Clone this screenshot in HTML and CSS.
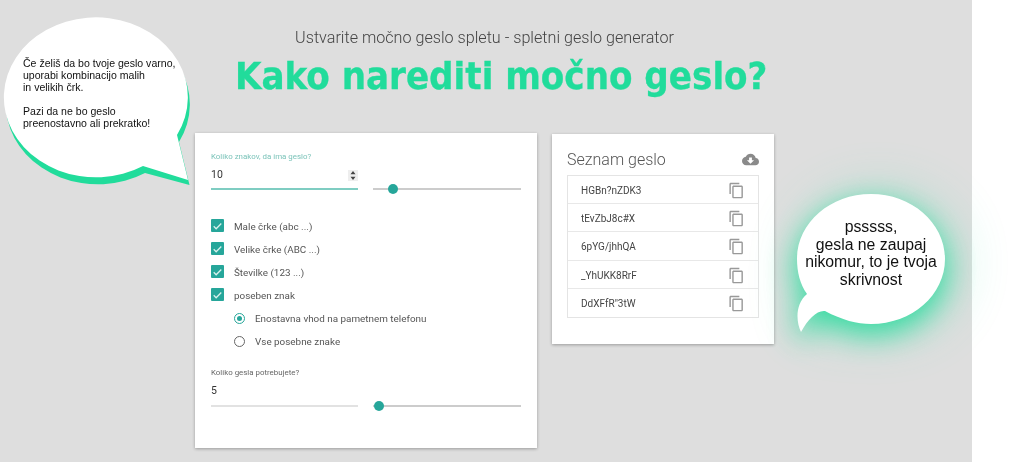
FILE: index.html
```html
<!DOCTYPE html>
<html lang="sl">
<head>
<meta charset="utf-8">
<title>Kako narediti močno geslo?</title>
<link rel="stylesheet" href="styles.css">
</head>
<body>
<div class="stage">
  <div class="content">
    <p class="subtitle">Ustvarite močno geslo spletu - spletni geslo generator</p>
    <h1 class="title">Kako narediti močno geslo?</h1>
    <div class="cards">
      <section class="card form-card">
        <div class="field-row">
          <div class="field active">
            <label class="field-label">Koliko znakov, da ima geslo?</label>
            <div class="field-value">
              <span>10</span>
              <span class="spinner">
                <svg width="6" height="9" viewBox="0 0 6 9"><path class="spin" d="M3 0l2.5 3.2h-5zM3 9L.5 5.8h5z"/></svg>
              </span>
            </div>
          </div>
          <div class="slider"><span class="thumb thumb-a"></span></div>
        </div>

        <ul class="checks">
          <li class="check"><span class="box"><svg width="14" height="14" viewBox="0 0 24 24"><path class="tick" d="M5 12.5l4.5 4.5L19 7.5"/></svg></span>Male črke (abc ...)</li>
          <li class="check"><span class="box"><svg width="14" height="14" viewBox="0 0 24 24"><path class="tick" d="M5 12.5l4.5 4.5L19 7.5"/></svg></span>Velike črke (ABC ...)</li>
          <li class="check"><span class="box"><svg width="14" height="14" viewBox="0 0 24 24"><path class="tick" d="M5 12.5l4.5 4.5L19 7.5"/></svg></span>Številke (123 ...)</li>
          <li class="check"><span class="box"><svg width="14" height="14" viewBox="0 0 24 24"><path class="tick" d="M5 12.5l4.5 4.5L19 7.5"/></svg></span>poseben znak</li>
        </ul>
        <ul class="radios">
          <li class="radio"><span class="ring on"><span class="dot"></span></span>Enostavna vhod na pametnem telefonu</li>
          <li class="radio"><span class="ring"></span>Vse posebne znake</li>
        </ul>

        <div class="field-row second-row">
          <div class="field tall">
            <label class="field-label dark">Koliko gesla potrebujete?</label>
            <div class="field-value"><span>5</span></div>
          </div>
          <div class="slider"><span class="thumb thumb-b"></span></div>
        </div>
      </section>

      <section class="card list-card">
        <div class="list-head">
          <h2 class="list-title">Seznam geslo</h2>
          <svg class="cloud" width="17" height="17" viewBox="0 0 24 24"><path d="M19.35 10.04C18.67 6.59 15.64 4 12 4 9.11 4 6.6 5.64 5.35 8.04 2.34 8.36 0 10.91 0 14c0 3.31 2.69 6 6 6h13c2.76 0 5-2.24 5-5 0-2.64-2.05-4.78-4.65-4.96zM17 13l-5 5-5-5h3V9h4v4h3z"/></svg>
        </div>
        <ul class="pw-list">
          <li class="pw"><span>HGBn?nZDK3</span><svg class="copy" width="17" height="17" viewBox="0 0 24 24"><path d="M16 1H4c-1.1 0-2 .9-2 2v14h2V3h12V1zm3 4H8c-1.1 0-2 .9-2 2v14c0 1.1.9 2 2 2h11c1.1 0 2-.9 2-2V7c0-1.1-.9-2-2-2zm0 16H8V7h11v14z"/></svg></li>
          <li class="pw"><span>tEvZbJ8c#X</span><svg class="copy" width="17" height="17" viewBox="0 0 24 24"><path d="M16 1H4c-1.1 0-2 .9-2 2v14h2V3h12V1zm3 4H8c-1.1 0-2 .9-2 2v14c0 1.1.9 2 2 2h11c1.1 0 2-.9 2-2V7c0-1.1-.9-2-2-2zm0 16H8V7h11v14z"/></svg></li>
          <li class="pw"><span>6pYG/jhhQA</span><svg class="copy" width="17" height="17" viewBox="0 0 24 24"><path d="M16 1H4c-1.1 0-2 .9-2 2v14h2V3h12V1zm3 4H8c-1.1 0-2 .9-2 2v14c0 1.1.9 2 2 2h11c1.1 0 2-.9 2-2V7c0-1.1-.9-2-2-2zm0 16H8V7h11v14z"/></svg></li>
          <li class="pw"><span>_YhUKK8RrF</span><svg class="copy" width="17" height="17" viewBox="0 0 24 24"><path d="M16 1H4c-1.1 0-2 .9-2 2v14h2V3h12V1zm3 4H8c-1.1 0-2 .9-2 2v14c0 1.1.9 2 2 2h11c1.1 0 2-.9 2-2V7c0-1.1-.9-2-2-2zm0 16H8V7h11v14z"/></svg></li>
          <li class="pw"><span>DdXFfR"3tW</span><svg class="copy" width="17" height="17" viewBox="0 0 24 24"><path d="M16 1H4c-1.1 0-2 .9-2 2v14h2V3h12V1zm3 4H8c-1.1 0-2 .9-2 2v14c0 1.1.9 2 2 2h11c1.1 0 2-.9 2-2V7c0-1.1-.9-2-2-2zm0 16H8V7h11v14z"/></svg></li>
        </ul>
      </section>
    </div>
  </div>

  <aside class="bubble bubble-left">
    <svg class="bubble-art" width="200" height="190" viewBox="0 0 200 190">
      <path class="green" d="M179 142L189.500 185L145 173A92 80 0 1 1 179 142Z"/>
      <path class="white" d="M177 135L188 180L143 166A92 80 0 1 1 177 135Z"/>
    </svg>
    <p class="bubble-text left-text">Če želiš da bo tvoje geslo varno,<br>uporabi kombinacijo malih<br>in velikih črk.<br><br>Pazi da ne bo geslo<br>preenostavno ali prekratko!</p>
  </aside>

  <aside class="bubble bubble-right">
    <svg class="bubble-art" width="264" height="240" viewBox="0 0 264 240">
      <path class="glow-wide" d="M97 70c0-36 33-65 74-65s74 29 74 65-33 65-74 65c-14 0-29-4-46-13-8-1-17 8-24 21-5-10-6-28 6-38-7-10-10-22-10-35z"/>
      <path class="glow" d="M97 70c0-36 33-65 74-65s74 29 74 65-33 65-74 65c-14 0-29-4-46-13-8-1-17 8-24 21-5-10-6-28 6-38-7-10-10-22-10-35z"/>
      <path class="white" d="M97 70c0-36 33-65 74-65s74 29 74 65-33 65-74 65c-14 0-29-4-46-13-8-1-17 8-24 21-5-10-6-28 6-38-7-10-10-22-10-35z"/>
    </svg>
    <p class="bubble-text right-text">psssss,<br>gesla ne zaupaj<br>nikomur, to je tvoja<br>skrivnost</p>
  </aside>
</div>
</body>
</html>
```
FILE: styles.css
```css
* { box-sizing: border-box; }
html, body { margin: 0; padding: 0; background: #fff; }
body { font-family: Roboto, "Liberation Sans", sans-serif; overflow: hidden; height: 462px; }
ul { list-style: none; margin: 0; padding: 0; }
p, h1, h2 { margin: 0; }

.stage { position: relative; width: 972px; height: 462px; background: #dedede; filter: blur(0.45px); }
.content { width: 579px; margin-left: 195px; padding-top: 28px; }

.subtitle { font-size: 16.15px; font-weight: 300; line-height: 20px; color: #444; text-align: center; }
.title {
  margin: 1px 0 0 40px; font-family: "DejaVu Sans", sans-serif; font-stretch: condensed; font-size: 38px; font-weight: 700;
  line-height: 55px; color: #21dc9b; white-space: nowrap; -webkit-text-stroke: 0.3px #21dc9b;
}
.cards { display: flex; align-items: flex-start; gap: 15px; margin-top: 29px; }
.card { background: #fff; box-shadow: 0 1px 3px rgba(0,0,0,.3); }

.form-card { width: 342px; height: 315px; padding: 19px 16px 0; }
.field-row { display: flex; gap: 15px; align-items: flex-end; }
.field { width: 147px; height: 38px; border-bottom: 2px solid #e2e2e2; }
.field.active { border-bottom-color: #7fcdc2; }
.field.tall { height: 39px; }
.field-label { display: block; font-size: 7.9px; line-height: 10px; color: #7cc4ba; }
.field-label.dark { color: #666; }
.field-value { display: flex; justify-content: space-between; align-items: center; margin-top: 6px; font-size: 10.5px; line-height: 14px; color: #333; }
.spinner { display: flex; align-items: center; justify-content: center; width: 10px; height: 11px; background: #eee; }
.spin { fill: #444; }
.slider { position: relative; width: 148px; height: 2px; background: #ccc; }
.thumb { position: absolute; top: -4px; width: 10px; height: 10px; border-radius: 50%; background: #26a69a; }
.thumb-a { left: 15px; }
.thumb-b { left: 1px; }

.checks { margin-top: 25px; }
.check { display: flex; align-items: center; height: 23px; font-size: 9.9px; color: #555; }
.box { display: flex; width: 13px; height: 13px; margin: 0 10px 2px 0; background: #26a69a; border-radius: 1px; }
.tick { fill: none; stroke: #d8f0ec; stroke-width: 2.4; }
.radios { padding-left: 23px; }
.radio { display: flex; align-items: center; height: 23px; font-size: 9.9px; color: #555; }
.ring { display: flex; align-items: center; justify-content: center; width: 11px; height: 11px; margin-right: 10px; border: 1.4px solid #666; border-radius: 50%; }
.ring.on { border-color: #26a69a; }
.dot { width: 5px; height: 5px; border-radius: 50%; background: #26a69a; }
.second-row { margin-top: 15px; }

.list-card { width: 222px; height: 210px; padding: 10px 15px 0; margin-top: 1px; }
.list-head { display: flex; justify-content: space-between; align-items: center; height: 31px; }
.list-title { font-size: 16px; font-weight: 300; color: #555; }
.cloud { fill: #8a8a8a; }
.pw-list { border: 1px solid #e4e4e4; height: 143px; }
.pw { display: flex; justify-content: space-between; align-items: center; height: 28.200px; padding: 2px 13px 0; font-size: 10px; color: #444; border-bottom: 1px solid #e8e8e8; }
.pw:last-child { border-bottom: 0; }
.copy { fill: #999; }

.bubble { position: absolute; }
.bubble-art { display: block; overflow: visible; }
.bubble-left { left: 0; top: 0; width: 200px; height: 190px; }
.bubble-right { left: 700px; top: 189px; width: 264px; height: 240px; }
.white { fill: #fff; }
.green { fill: #21dc9b; }
.glow { fill: #21dc9b; filter: blur(15px); transform: translateY(10px); opacity: .9; }
.glow-wide { fill: #21dc9b; filter: blur(30px); opacity: .3; transform: translate(8px, 4px); }
.bubble-text { position: absolute; margin: 0; font-family: "Liberation Sans", Arial, sans-serif; color: #111; }
.left-text { left: 23px; top: 57px; font-size: 10.55px; line-height: 12px; white-space: nowrap; }
.right-text { left: 97px; top: 29px; width: 148px; font-size: 15.8px; line-height: 17.700px; text-align: center; }
```
